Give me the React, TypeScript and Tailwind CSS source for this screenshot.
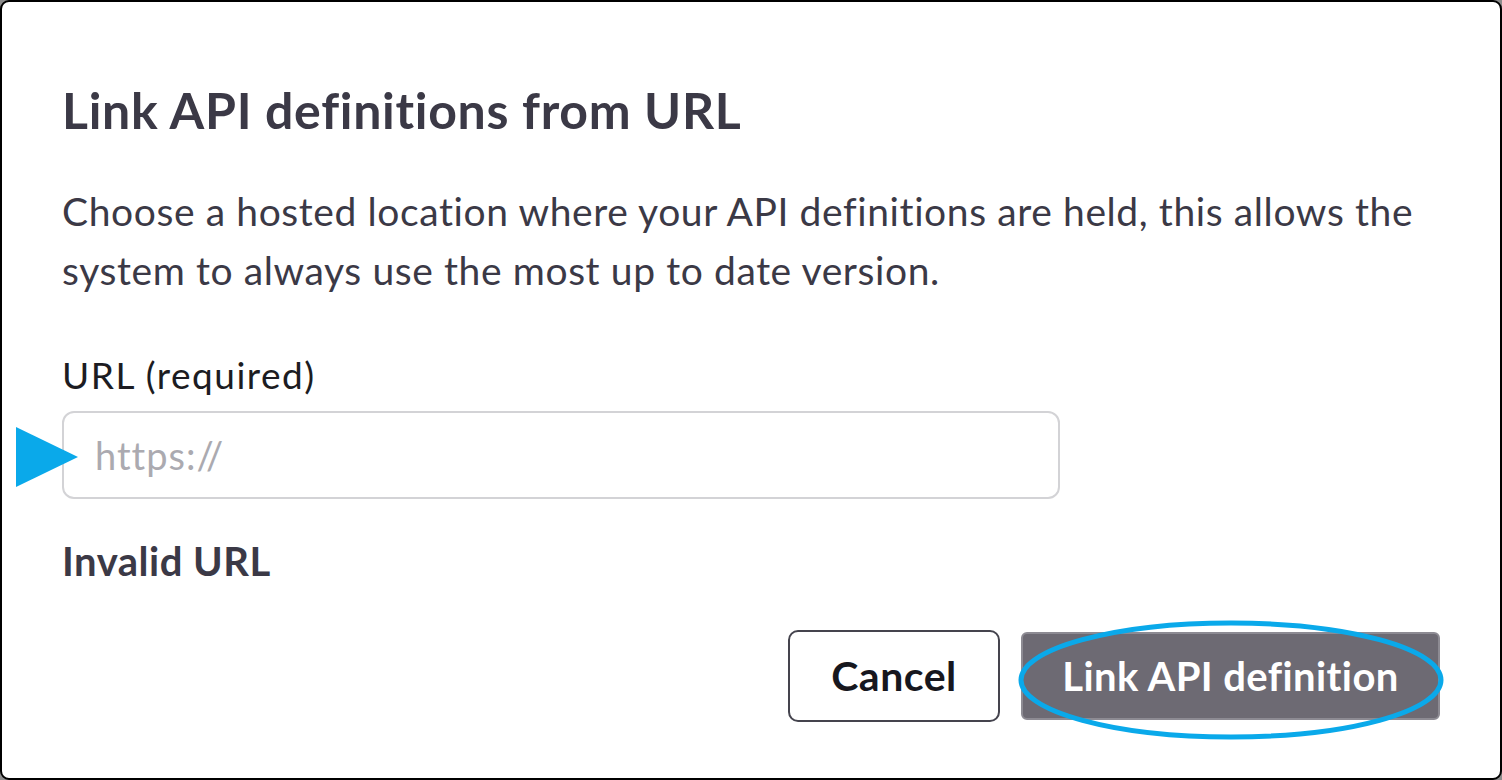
import React from 'react';

export default function App() {
  return (
    <div className="w-[1502px] h-[780px] bg-[#8c8c8c]" style={{ fontFamily: 'Lato, "Liberation Sans", sans-serif' }}>
      <div className="relative h-full rounded-[9px] border-2 border-black bg-white px-[60px] flex flex-col">
        {/* Title */}
        <h1 className="mt-[84px] text-[50px] leading-[48px] font-bold tracking-[0.7px] text-[#3b3946]">
          Link API definitions from URL
        </h1>

        {/* Description */}
        <p className="mt-[48px] text-[39px] leading-[59px] tracking-[0.6px] text-[#3b3946]">
          Choose a hosted location where your API definitions are held, this allows the system to always use the most up to date version.
        </p>

        {/* URL field */}
        <label className="mt-[55px] text-[37px] leading-[40px] tracking-[1.5px] text-[#1c1c22]">URL (required)</label>
        <input
          placeholder="https://"
          className="mt-[16px] w-[998px] h-[88px] rounded-[12px] border-2 border-[#d3d3d6] px-[31px] text-[38px] tracking-[1px] text-[#1c1c22] placeholder:text-[#abaab0] outline-none"
        />

        <div className="mt-[40px] text-[40px] leading-[44px] font-bold tracking-[0.5px] text-[#3b3946]">Invalid URL</div>

        {/* Actions */}
        <div className="mt-[47px] flex items-center justify-end gap-[21px]">
          <button className="w-[212px] h-[92px] rounded-[10px] border-2 border-[#45444e] bg-white text-[41px] font-bold tracking-[0.5px] text-[#17171e]">
            Cancel
          </button>
          <button className="w-[419px] h-[88px] rounded-[6px] border-2 border-[#8d8b93] bg-[#6d6a73] text-[40px] font-bold tracking-[0.4px] text-white">
            Link API definition
          </button>
        </div>

        {/* Annotation: arrow pointing at input */}
        <svg className="absolute left-[14px] top-[425px]" width="62" height="62" viewBox="0 0 62 62">
          <polygon points="0,0 62,30 0,60" fill="#0aa9ea" />
        </svg>

        {/* Annotation: ellipse around primary button */}
        <svg className="absolute left-[1015px] top-[616px]" width="432" height="124" viewBox="0 0 432 124">
          <ellipse cx="214" cy="62" rx="210" ry="57" fill="none" stroke="#0aa9ea" strokeWidth="5" />
        </svg>
      </div>
    </div>
  );
}
